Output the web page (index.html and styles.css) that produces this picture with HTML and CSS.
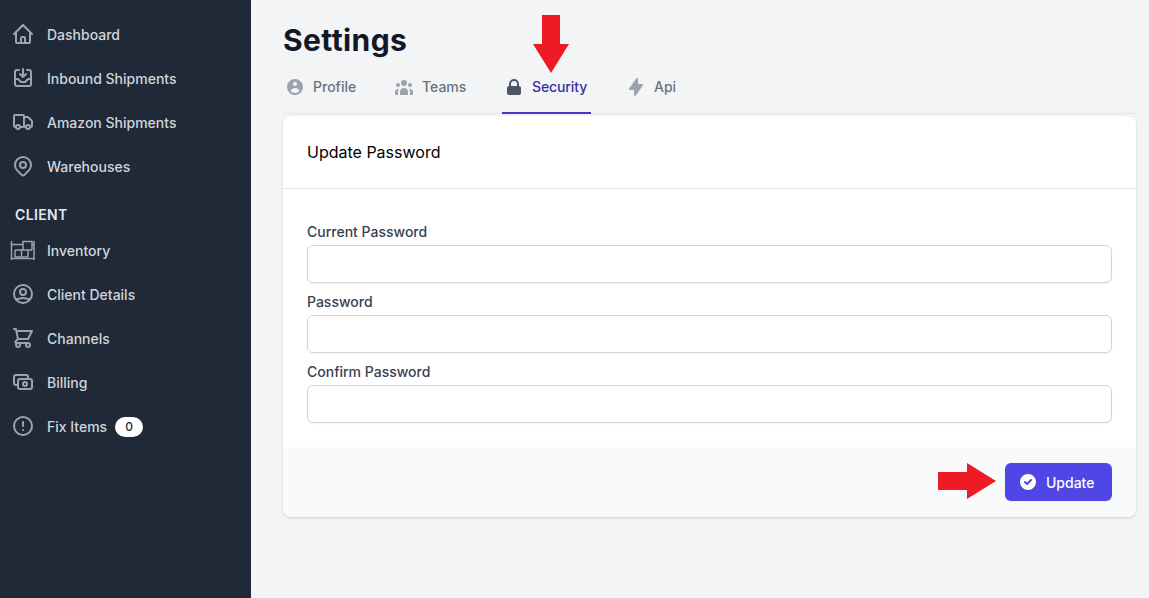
FILE: index.html
```html
<!DOCTYPE html>
<html lang="en">
<head>
<meta charset="utf-8">
<title>Settings</title>
<link rel="stylesheet" href="styles.css">
</head>
<body>
<div class="app">
  <aside class="sidebar">
    <nav class="nav">
      <a class="nav-item"><svg class="nav-icon" viewBox="0 0 24 24"><path d="M3 12l2-2m0 0l7-7 7 7M5 10v10a1 1 0 001 1h3m10-11l2 2m-2-2v10a1 1 0 01-1 1h-3m-6 0a1 1 0 001-1v-4a1 1 0 011-1h2a1 1 0 011 1v4a1 1 0 001 1m-6 0h6"/></svg><span>Dashboard</span></a>
      <a class="nav-item"><svg class="nav-icon" viewBox="0 0 24 24"><path d="M8 4H6a2 2 0 00-2 2v12a2 2 0 002 2h12a2 2 0 002-2V6a2 2 0 00-2-2h-2m-4-1v8m0 0l3-3m-3 3L9 8m-5 5h2.586a1 1 0 01.707.293l2.414 2.414a1 1 0 00.707.293h3.172a1 1 0 00.707-.293l2.414-2.414a1 1 0 01.707-.293H20"/></svg><span>Inbound Shipments</span></a>
      <a class="nav-item"><svg class="nav-icon" viewBox="0 0 24 24"><path d="M9 17a2 2 0 11-4 0 2 2 0 014 0zM19 17a2 2 0 11-4 0 2 2 0 014 0z"/><path d="M13 16V6a1 1 0 00-1-1H4a1 1 0 00-1 1v10a1 1 0 001 1h1m8-1a1 1 0 01-1 1H9m4-1V8a1 1 0 011-1h2.586a1 1 0 01.707.293l3.414 3.414a1 1 0 01.293.707V16a1 1 0 01-1 1h-1m-6-1a1 1 0 001 1h1"/></svg><span>Amazon Shipments</span></a>
      <a class="nav-item"><svg class="nav-icon" viewBox="0 0 24 24"><path d="M17.657 16.657L13.414 20.9a1.998 1.998 0 01-2.827 0l-4.244-4.243a8 8 0 1111.314 0z"/><path d="M15 11a3 3 0 11-6 0 3 3 0 016 0z"/></svg><span>Warehouses</span></a>
      <div class="nav-heading">CLIENT</div>
      <a class="nav-item"><svg class="nav-icon nav-icon-wide" viewBox="0 0 26 24"><path d="M1.500 2v19M24 2v19M1.500 5.500H13M22 5.500h2M1.500 19.500H24"/><path d="M13 11V2.500h9V11M5 11h17M5 18v-7M18 18v-7M5 18h13M11.500 11v7"/></svg><span>Inventory</span></a>
      <a class="nav-item"><svg class="nav-icon" viewBox="0 0 24 24"><path d="M5.121 17.804A13.937 13.937 0 0112 16c2.500 0 4.847.655 6.879 1.804M15 10a3 3 0 11-6 0 3 3 0 016 0zm6 2a9 9 0 11-18 0 9 9 0 0118 0z"/></svg><span>Client Details</span></a>
      <a class="nav-item"><svg class="nav-icon" viewBox="0 0 24 24"><path d="M3 3h2l.4 2M7 13h10l4-8H5.400M7 13L5.400 5M7 13l-2.293 2.293c-.63.63-.184 1.707.707 1.707H17m0 0a2 2 0 100 4 2 2 0 000-4zm-8 2a2 2 0 11-4 0 2 2 0 014 0z"/></svg><span>Channels</span></a>
      <a class="nav-item"><svg class="nav-icon" viewBox="0 0 24 24"><path d="M17 9V7a2 2 0 00-2-2H5a2 2 0 00-2 2v6a2 2 0 002 2h2m2 4h10a2 2 0 002-2v-6a2 2 0 00-2-2H9a2 2 0 00-2 2v6a2 2 0 002 2zm7-5a2 2 0 11-4 0 2 2 0 014 0z"/></svg><span>Billing</span></a>
      <a class="nav-item"><svg class="nav-icon" viewBox="0 0 24 24"><path d="M12 8v4m0 4h.01M21 12a9 9 0 11-18 0 9 9 0 0118 0z"/></svg><span>Fix Items</span><span class="badge">0</span></a>
    </nav>
  </aside>
  <main class="main">
    <h1 class="title">Settings</h1>
    <div class="tabs">
      <a class="tab tab-profile"><svg class="tab-icon" viewBox="0 0 20 20"><path fill-rule="evenodd" d="M18 10a8 8 0 11-16 0 8 8 0 0116 0zm-6-3a2 2 0 11-4 0 2 2 0 014 0zm-2 4a5 5 0 00-4.546 2.916A5.986 5.986 0 0010 16a5.986 5.986 0 004.546-2.084A5 5 0 0010 11z"/></svg><span>Profile</span></a>
      <a class="tab tab-teams"><svg class="tab-icon" viewBox="0 0 20 20"><path d="M13 6a3 3 0 11-6 0 3 3 0 016 0zM18 8a2 2 0 11-4 0 2 2 0 014 0zM14 15a4 4 0 00-8 0v3h8v-3zM6 8a2 2 0 11-4 0 2 2 0 014 0zM16 18v-3a5.972 5.972 0 00-.75-2.906A3.005 3.005 0 0119 15v3h-3zM4.750 12.094A5.973 5.973 0 004 15v3H1v-3a3 3 0 013.750-2.906z"/></svg><span>Teams</span></a>
      <a class="tab tab-active"><svg class="tab-icon" viewBox="0 0 20 20"><path fill-rule="evenodd" d="M5 9V7a5 5 0 0110 0v2a2 2 0 012 2v5a2 2 0 01-2 2H5a2 2 0 01-2-2v-5a2 2 0 012-2zm8-2v2H7V7a3 3 0 016 0z"/></svg><span>Security</span></a>
      <a class="tab tab-api"><svg class="tab-icon" viewBox="0 0 20 20"><path fill-rule="evenodd" d="M11.300 1.046A1 1 0 0112 2v5h4a1 1 0 01.82 1.573l-7 10A1 1 0 018 18v-5H4a1 1 0 01-.82-1.573l7-10a1 1 0 011.120-.38z"/></svg><span>Api</span></a>
    </div>
    <section class="card">
      <header class="card-header">Update Password</header>
      <div class="card-body">
        <label class="field"><span class="field-label">Current Password</span><input class="field-input" type="password"></label>
        <label class="field"><span class="field-label">Password</span><input class="field-input" type="password"></label>
        <label class="field"><span class="field-label">Confirm Password</span><input class="field-input" type="password"></label>
      </div>
      <footer class="card-footer">
        <button class="btn" type="button"><svg class="btn-icon" viewBox="0 0 20 20"><path fill-rule="evenodd" d="M10 18a8 8 0 100-16 8 8 0 000 16zm3.707-9.293a1 1 0 00-1.414-1.414L9 10.586 7.707 9.293a1 1 0 00-1.414 1.414l2 2a1 1 0 001.414 0l4-4z"/></svg><span>Update</span></button>
      </footer>
    </section>
  </main>
</div>
<svg class="arrow arrow-down" viewBox="0 0 36 58"><polygon points="9,0 27,0 27,29 36,29 18,58 0,29 9,29"/></svg>
<svg class="arrow arrow-right" viewBox="0 0 58 36"><polygon points="0,9 29,9 29,0 58,18 29,36 29,27 0,27"/></svg>
</body>
</html>
```

FILE: styles.css
```css
* { box-sizing: border-box; }
html, body { margin: 0; height: 100%; }
body {
  font-family: Inter, "Liberation Sans", sans-serif;
  background: #f3f4f6;
  overflow: hidden;
  position: relative;
}
.app { display: flex; height: 598px; }
.sidebar {
  width: 251px;
  flex: none;
  background: #1f2937;
  color: #d1d5db;
}
.nav { display: flex; flex-direction: column; padding-top: 13px; }
.nav-item {
  display: flex;
  align-items: center;
  height: 44px;
  padding-left: 11px;
  font-size: 14px;
  line-height: 20px;
  font-weight: 500;
  color: #d1d5db;
}
.nav-icon {
  width: 24px;
  height: 24px;
  margin: 0 12px 2px 0;
  flex: none;
  fill: none;
  stroke: #9ca3af;
  stroke-width: 2;
  stroke-linecap: round;
  stroke-linejoin: round;
}
.nav-icon-wide {
  width: 26px;
  margin: 0 11px 0 -1px;
  stroke-width: 1.5;
  stroke-linecap: butt;
  stroke-linejoin: miter;
}
.nav-heading {
  height: 40px;
  padding: 16px 0 0 15px;
  font-size: 14px;
  line-height: 20px;
  font-weight: 600;
  letter-spacing: 0.35px;
  color: #e5e7eb;
}
.badge {
  margin-left: 8px;
  width: 28px;
  height: 20px;
  border-radius: 10px;
  background: #fff;
  color: #1f2937;
  font-size: 12px;
  line-height: 20px;
  text-align: center;
}
.main { flex: 1; min-width: 0; padding: 20px 13px 0 32px; }
.title {
  margin: 0;
  font-size: 30px;
  line-height: 40px;
  font-weight: 700;
  letter-spacing: 0.4px;
  color: #111827;
}
.tabs {
  display: flex;
  height: 54px;
  padding-top: 7px;
  border-bottom: 1px solid #e5e7eb;
}
.tab {
  display: flex;
  align-items: center;
  height: 47px;
  padding: 0 4px 6px;
  font-size: 14px;
  font-weight: 500;
  color: #6b7280;
  border-bottom: 2px solid transparent;
}
.tab-profile { width: 83px; padding-left: 2px; }
.tab-teams { margin-left: 24px; width: 80px; }
.tab-active { margin-left: 32px; width: 89px; padding-left: 2px; color: #3730a3; border-bottom-color: #4338ca; }
.tab-active span { letter-spacing: -0.1px; }
.tab-api { margin-left: 31px; }
.tab-icon { width: 20px; height: 20px; margin-right: 8px; flex: none; fill: #9ca3af; }
.tab-active .tab-icon { fill: #4b5563; }
.card {
  margin-top: 2px;
  background: #fff;
  border-radius: 8px;
  box-shadow: 0 1px 3px rgba(0,0,0,.1), 0 1px 2px rgba(0,0,0,.06);
  overflow: hidden;
}
.card-header {
  height: 73px;
  padding: 0 24px;
  display: flex;
  align-items: center;
  font-size: 16px;
  color: #000;
  border-bottom: 1px solid #e5e7eb;
}
.card-body { display: flex; flex-direction: column; gap: 9px; padding: 33px 24px 24px; }
.field { display: block; }
.field-label {
  display: block;
  font-size: 14px;
  line-height: 20px;
  font-weight: 500;
  color: #374151;
  margin-bottom: 3px;
}
.field-input {
  display: block;
  width: 100%;
  height: 38px;
  border: 1px solid #d1d5db;
  border-radius: 6px;
  background: #fff;
  box-shadow: 0 1px 2px rgba(0,0,0,.05);
}
.card-footer {
  display: flex;
  justify-content: flex-end;
  padding: 16px 24px;
  background: #f9fafb;
}
.btn {
  display: flex;
  align-items: center;
  height: 38px;
  width: 107px;
  padding: 0 16px 0 13px;
  border: 0;
  border-radius: 6px;
  background: #4f46e5;
  color: #fff;
  font-family: inherit;
  font-size: 14px;
  font-weight: 500;
  box-shadow: 0 1px 2px rgba(0,0,0,.05);
}
.btn-icon { width: 20px; height: 20px; margin-right: 8px; fill: #fff; flex: none; }
.arrow { position: absolute; fill: #ed1c24; }
.arrow-down { left: 533px; top: 15px; width: 36px; height: 58px; }
.arrow-right { left: 938px; top: 463px; width: 58px; height: 36px; }
```
